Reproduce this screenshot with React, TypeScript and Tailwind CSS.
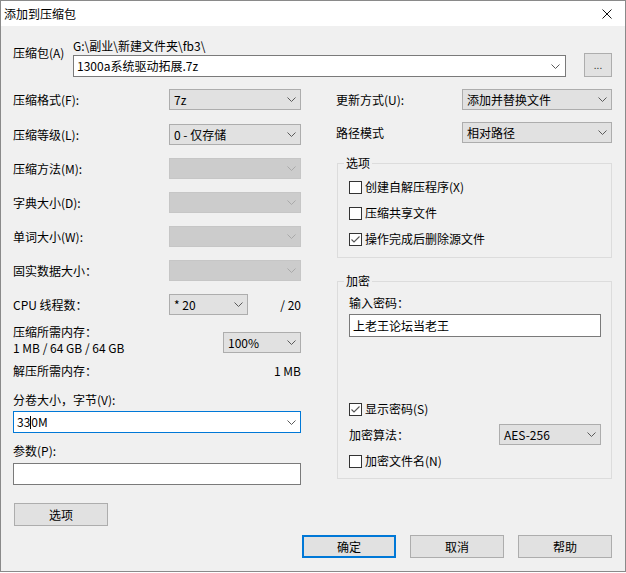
import React from "react";

function Chevron({ color }: { color: string }) {
  return (
    <svg width="9" height="5" viewBox="0 0 9 5" fill="none">
      <polyline points="0.5,0.5 4.5,4.5 8.5,0.5" stroke={color} strokeWidth="1" />
    </svg>
  );
}

function Combo({ value, className, disabled }: { value?: string; className: string; disabled?: boolean }) {
  return (
    <div
      className={`flex items-center justify-between border pl-[4px] pr-[4px] ${
        disabled ? "bg-[#cccccc] border-[#c6c6c6]" : "bg-[#e1e1e1] border-[#adadad]"
      } ${className}`}
    >
      <span className="leading-[16px] whitespace-nowrap">{value}</span>
      <Chevron color={disabled ? "#a9a9a9" : "#5a5a5a"} />
    </div>
  );
}

function Check({ checked, label }: { checked?: boolean; label: string }) {
  return (
    <div className="flex items-center h-[20px]">
      <span className="w-[13px] h-[13px] border border-[#333333] bg-white flex items-center justify-center">
        {checked && (
          <svg width="11" height="11" viewBox="0 0 11 11" fill="none">
            <polyline points="1.5,5.5 4,8 9.5,2.5" stroke="#555555" strokeWidth="1.1" />
          </svg>
        )}
      </span>
      <span className="ml-[3px] leading-[16px]">{label}</span>
    </div>
  );
}

function Button({ label, primary, className = "" }: { label: string; primary?: boolean; className?: string }) {
  return (
    <div
      className={`w-[94px] h-[23px] flex items-center justify-center bg-[#e1e1e1] ${
        primary ? "border-2 border-[#0078d7]" : "border border-[#adadad]"
      } ${className}`}
    >
      <span className="leading-[16px]">{label}</span>
    </div>
  );
}

export default function App() {
  return (
    <div className="w-[626px] h-[573px] bg-white text-[12px] text-black font-['Noto_Sans_CJK_SC',sans-serif]">
      <div className="w-[626px] h-[572px] border border-[#8a8a8a] flex flex-col bg-[#f0f0f0]">
        {/* title bar */}
        <div className="h-[25px] bg-white flex items-center justify-between pl-[3px] pr-[13px]">
          <span className="leading-[16px]">添加到压缩包</span>
          <svg width="10" height="10" viewBox="0 0 10 10" fill="none">
            <path d="M0.5 0.5 L9.5 9.5 M9.5 0.5 L0.5 9.5" stroke="#111111" strokeWidth="1" />
          </svg>
        </div>

        <div className="flex-1 flex flex-col pl-[12px] pr-[13px] pt-[12px]">
          {/* archive path */}
          <div className="flex items-start">
            <div className="w-[60px] mt-[7px] leading-[16px]">压缩包(A)</div>
            <div className="w-[493px] flex flex-col">
              <div className="h-[16px] leading-[16px]">{"G:\\副业\\新建文件夹\\fb3\\"}</div>
              <div className="mt-[1px] h-[22px] bg-white border border-[#7a7a7a] flex items-center justify-between pl-[3px] pr-[5px]">
                <span className="leading-[16px]">1300a系统驱动拓展.7z</span>
                <Chevron color="#5a5a5a" />
              </div>
            </div>
            <div className="ml-[18px] mt-[15px] w-[28px] h-[24px] bg-[#e1e1e1] border border-[#adadad] flex items-center justify-center">
              <span className="leading-[10px] text-[10px] text-[#333333]">...</span>
            </div>
          </div>

          {/* two columns */}
          <div className="flex mt-[12px]">
            {/* left */}
            <div className="w-[288px] flex flex-col">
              <div className="flex items-center justify-between">
                <span className="leading-[16px]">压缩格式(F):</span>
                <Combo className="w-[132px] h-[21px]" value="7z" />
              </div>
              <div className="flex items-center justify-between mt-[14px]">
                <span className="leading-[16px]">压缩等级(L):</span>
                <Combo className="w-[132px] h-[21px]" value="0 - 仅存储" />
              </div>
              <div className="flex items-center justify-between mt-[13px]">
                <span className="leading-[16px]">压缩方法(M):</span>
                <Combo className="w-[132px] h-[21px]" disabled />
              </div>
              <div className="flex items-center justify-between mt-[13px]">
                <span className="leading-[16px]">字典大小(D):</span>
                <Combo className="w-[132px] h-[21px]" disabled />
              </div>
              <div className="flex items-center justify-between mt-[13px]">
                <span className="leading-[16px]">单词大小(W):</span>
                <Combo className="w-[132px] h-[21px]" disabled />
              </div>
              <div className="flex items-center justify-between mt-[13px]">
                <span className="leading-[16px]">固实数据大小：</span>
                <Combo className="w-[132px] h-[21px]" disabled />
              </div>
              <div className="flex items-center mt-[13px]">
                <span className="w-[156px] leading-[16px]">CPU 线程数：</span>
                <Combo className="w-[79px] h-[21px]" value="* 20" />
                <span className="flex-1 text-right leading-[16px]">/ 20</span>
              </div>
              <div className="flex items-start justify-between mt-[9px]">
                <div className="flex flex-col leading-[16px]">
                  <span>压缩所需内存：</span>
                  <span>1 MB / 64 GB / 64 GB</span>
                </div>
                <Combo className="w-[78px] h-[21px] mt-[8px]" value="100%" />
              </div>
              <div className="flex items-center justify-between mt-[7px] leading-[16px]">
                <span>解压所需内存：</span>
                <span>1 MB</span>
              </div>
              <div className="mt-[13px] leading-[16px]">分卷大小，字节(V):</div>
              <div className="mt-[3px] h-[22px] bg-white border border-[#0078d7] flex items-center justify-between pl-[3px] pr-[4px]">
                <span className="flex items-center leading-[16px]">
                  <span>33</span>
                  <span className="inline-block w-px h-[13px] bg-black" />
                  <span>0M</span>
                </span>
                <Chevron color="#5a5a5a" />
              </div>
              <div className="mt-[10px] leading-[16px]">参数(P):</div>
              <div className="mt-[4px] h-[22px] bg-white border border-[#7a7a7a]" />
              <Button label="选项" className="mt-[18px] ml-[1px]" />
            </div>

            {/* right */}
            <div className="w-[276px] ml-[35px] flex flex-col">
              <div className="flex items-center justify-between">
                <span className="leading-[16px]">更新方式(U):</span>
                <Combo className="w-[150px] h-[21px]" value="添加并替换文件" />
              </div>
              <div className="flex items-center justify-between mt-[12px]">
                <span className="leading-[16px]">路径模式</span>
                <Combo className="w-[150px] h-[21px]" value="相对路径" />
              </div>

              <fieldset className="mt-[12px] ml-[1px] border border-[#dcdcdc]">
                <legend className="ml-[6px] px-[2px] leading-[16px]">选项</legend>
                <div className="pl-[11px] pt-[3px] pb-[5px] flex flex-col">
                  <div className="h-[26px] flex items-center">
                    <Check label="创建自解压程序(X)" />
                  </div>
                  <div className="h-[26px] flex items-center">
                    <Check label="压缩共享文件" />
                  </div>
                  <div className="h-[26px] flex items-center">
                    <Check checked label="操作完成后删除源文件" />
                  </div>
                </div>
              </fieldset>

              <fieldset className="mt-[15px] ml-[1px] border border-[#dcdcdc]">
                <legend className="ml-[6px] px-[2px] leading-[16px]">加密</legend>
                <div className="pl-[11px] pr-[10px] pb-[7px] flex flex-col">
                  <div className="mt-[6px] leading-[16px]">输入密码：</div>
                  <div className="mt-[3px] h-[23px] bg-white border border-[#7a7a7a] flex items-center pl-[3px]">
                    <span className="leading-[16px]">上老王论坛当老王</span>
                  </div>
                  <div className="mt-[62px]">
                    <Check checked label="显示密码(S)" />
                  </div>
                  <div className="mt-[5px] flex items-center justify-between">
                    <span className="leading-[16px]">加密算法：</span>
                    <Combo className="w-[102px] h-[21px]" value="AES-256" />
                  </div>
                  <div className="mt-[6px]">
                    <Check label="加密文件名(N)" />
                  </div>
                </div>
              </fieldset>
            </div>
          </div>

          {/* buttons */}
          <div className="flex justify-end gap-[14px] mt-[9px]">
            <Button label="确定" primary />
            <Button label="取消" />
            <Button label="帮助" />
          </div>
        </div>
      </div>
    </div>
  );
}
